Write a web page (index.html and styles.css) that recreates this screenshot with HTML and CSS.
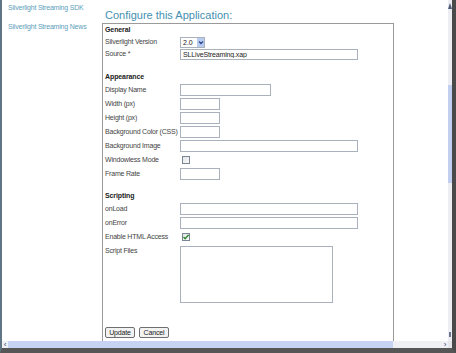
FILE: index.html
```html
<!DOCTYPE html>
<html lang="en">
<head>
  <meta charset="UTF-8" />
  <title>Configure this Application</title>
  <link rel="stylesheet" href="styles.css">
</head>
<body>
  <div class="frame">
    <div class="page">

      <div class="nav">
        <a href="#">Silverlight Streaming SDK</a>
        <a href="#">Silverlight Streaming News</a>
      </div>

      <div class="main">
        <h1>Configure this Application:</h1>

        <form class="config" onsubmit="return false;">
          <h2>General</h2>
          <div class="row tight">
            <label>Silverlight Version</label>
            <span class="select">2.0
              <span class="drop">
                <svg width="6" height="9" viewBox="0 0 6 9"><path d="M1 3.5 L3 5.5 L5 3.5" fill="none" stroke="#2c4a94" stroke-width="1.3"/></svg>
              </span>
            </span>
          </div>
          <div class="row tight">
            <label>Source *</label>
            <input type="text" class="wide" value="SLLiveStreaming.xap" />
          </div>

          <h2 class="gap-a">Appearance</h2>
          <div class="row"><label>Display Name</label><input type="text" class="mid" /></div>
          <div class="row"><label>Width (px)</label><input type="text" class="small" /></div>
          <div class="row"><label>Height (px)</label><input type="text" class="small" /></div>
          <div class="row"><label>Background Color (CSS)</label><input type="text" class="small" /></div>
          <div class="row"><label>Background Image</label><input type="text" class="wide" /></div>
          <div class="row"><label>Windowless Mode</label><span class="check"></span></div>
          <div class="row"><label>Frame Rate</label><input type="text" class="small" /></div>

          <h2 class="gap-b">Scripting</h2>
          <div class="row"><label>onLoad</label><input type="text" class="wide" /></div>
          <div class="row"><label>onError</label><input type="text" class="wide" /></div>
          <div class="row">
            <label>Enable HTML Access</label>
            <span class="check">
              <svg width="8" height="8" viewBox="0 0 8 8"><path d="M1.5 4 L3.2 5.8 L6.6 1.8" fill="none" stroke="#2f8a2f" stroke-width="1.4"/></svg>
            </span>
          </div>
          <div class="row top">
            <label>Script Files</label>
            <textarea></textarea>
          </div>

          <div class="buttons">
            <button>Update</button>
            <button>Cancel</button>
          </div>
        </form>
      </div>

    </div>

    <div class="vscroll">
      <span class="arrow-up"></span>
      <span class="vthumb"></span>
      <span class="arrow-down"></span>
    </div>

    <div class="hscroll">
      <span class="harrow">&lsaquo;</span>
      <span class="hthumb"></span>
      <span class="htrack"></span>
      <span class="harrow">&rsaquo;</span>
    </div>

    <div class="corner"></div>
  </div>
</body>
</html>
```

FILE: styles.css
```css
body {
  margin: 0;
  background-color: #fff;
  font-family: "Liberation Sans", Arial, sans-serif;
  overflow: hidden;
}

.frame {
  width: 456px;
  height: 353px;
  box-sizing: border-box;
  display: grid;
  grid-template-columns: 1fr 4px;
  grid-template-rows: 1fr 7px;
  border-left: 2px solid #607585;
  border-right: 4px solid #4a4a4a;
  border-bottom: 5px solid #565656;
}

.page {
  display: flex;
  overflow: hidden;
}

/* left links */

.nav {
  width: 100px;
  flex-shrink: 0;
  padding: 3px 0 0 6px;
  box-sizing: border-box;
  display: flex;
  flex-direction: column;
  gap: 9px;
}

.nav a {
  font-size: 7px;
  line-height: 10px;
  letter-spacing: -0.2px;
  color: #5ea0bb;
  text-decoration: none;
  white-space: nowrap;
}

/* form */

.main {
  flex: 1;
  padding-top: 9px;
}

h1 {
  margin: 0 0 1px 3px;
  font-size: 11px;
  line-height: 13px;
  font-weight: normal;
  color: #4590b0;
}

.config {
  width: 292px;
  box-sizing: border-box;
  border: 1px solid #9a9a9a;
  padding: 0 0 20px 2px;
}

h2 {
  margin: 0;
  font-size: 7px;
  line-height: 12px;
  letter-spacing: -0.1px;
  color: #222;
}

h2.gap-a {
  margin-top: 11px;
}

h2.gap-b {
  margin-top: 9px;
}

.row {
  display: grid;
  grid-template-columns: 75px auto;
  align-items: center;
  justify-items: start;
  height: 14px;
}

.row.tight {
  height: 12px;
}

.row.top {
  align-items: start;
  height: auto;
}

label {
  font-size: 7px;
  line-height: 12px;
  letter-spacing: -0.2px;
  color: #444;
  white-space: nowrap;
}

.row.top label {
  margin-top: 1px;
}

input,
textarea {
  box-sizing: border-box;
  height: 12px;
  margin: 0;
  padding: 0 2px;
  border: 1px solid #a9b2bc;
  font-family: "Liberation Sans", Arial, sans-serif;
  font-size: 7px;
  letter-spacing: -0.15px;
  color: #222;
  background: #fff;
}

.row.tight input {
  height: 11px;
}

input.wide { width: 178px; }
input.mid { width: 91px; }
input.small { width: 40px; }

textarea {
  width: 153px;
  height: 57px;
  margin-top: 2px;
  resize: none;
}

.select {
  box-sizing: border-box;
  width: 25px;
  height: 11px;
  border: 1px solid #a9b2bc;
  display: flex;
  align-items: center;
  justify-content: space-between;
  padding-left: 2px;
  font-size: 7px;
  color: #222;
}

.drop {
  width: 7px;
  height: 9px;
  background-color: #b9cbee;
  display: flex;
  align-items: center;
  justify-content: center;
}

.check {
  box-sizing: border-box;
  width: 8px;
  height: 8px;
  margin-left: 2px;
  border: 1px solid #7b8694;
  background: linear-gradient(135deg, #e4e6ea, #fafafa);
  display: flex;
  align-items: center;
  justify-content: center;
}

.check svg {
  flex-shrink: 0;
}

.buttons {
  display: flex;
  gap: 4px;
  margin-top: 24px;
}

.buttons button {
  box-sizing: border-box;
  width: 30px;
  height: 11px;
  padding: 0;
  border: 1px solid #6f6f6f;
  border-radius: 2px;
  background-color: #f2f2f2;
  font-family: "Liberation Sans", Arial, sans-serif;
  font-size: 7px;
  letter-spacing: -0.15px;
  color: #222;
  line-height: 9px;
}

/* window scrollbars */

.vscroll {
  background-color: #eceef3;
  display: flex;
  flex-direction: column;
  align-items: center;
  padding-top: 3px;
}

.arrow-up {
  width: 0;
  height: 0;
  border-left: 2px solid transparent;
  border-right: 2px solid transparent;
  border-bottom: 6px solid #4d5a78;
}

.vthumb {
  width: 4px;
  height: 98px;
  margin-top: 76px;
  background-color: #c3cff0;
}

.arrow-down {
  width: 2px;
  height: 5px;
  margin-top: auto;
  margin-bottom: 4px;
  background-color: #6a7690;
}

.hscroll {
  display: flex;
  align-items: center;
  background-color: #eef0f4;
}

.hthumb {
  width: 385px;
  height: 7px;
  background-color: #c6d3f2;
}

.htrack {
  flex: 1;
}

.harrow {
  width: 6px;
  text-align: center;
  font-size: 8px;
  line-height: 7px;
  color: #2c3e70;
}

.corner {
  background-color: #e4e6ea;
}
```
